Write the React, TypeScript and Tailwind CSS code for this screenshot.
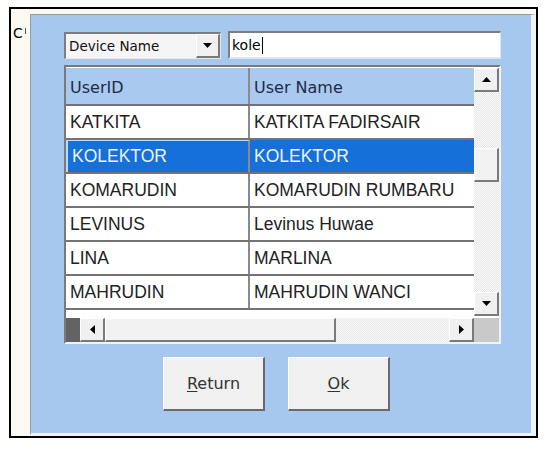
import React from 'react';

const rows = [
  ['KATKITA', 'KATKITA FADIRSAIR'],
  ['KOLEKTOR', 'KOLEKTOR'],
  ['KOMARUDIN', 'KOMARUDIN RUMBARU'],
  ['LEVINUS', 'Levinus Huwae'],
  ['LINA', 'MARLINA'],
  ['MAHRUDIN', 'MAHRUDIN WANCI'],
];

type Dir = 'up' | 'down' | 'left' | 'right';

const Arrow = ({ dir }: { dir: Dir }) => {
  const vertical = dir === 'up' || dir === 'down';
  const points = {
    up: '0,5 4.5,0 9,5',
    down: '0,0 9,0 4.5,5',
    left: '5,0 5,9 0,4.5',
    right: '0,0 0,9 5,4.5',
  }[dir];
  return (
    <svg width={vertical ? 9 : 5} height={vertical ? 5 : 9} viewBox={vertical ? '0 0 9 5' : '0 0 5 9'}>
      <polygon points={points} fill="#000" />
    </svg>
  );
};

const ScrollButton = ({ dir, className }: { dir: Dir; className: string }) => (
  <div
    className={`flex items-center justify-center bg-[#f0f0f0] border-t border-l border-t-white border-l-white border-b-2 border-r-2 border-b-[#7a7a7a] border-r-[#7a7a7a] ${className}`}
  >
    <Arrow dir={dir} />
  </div>
);

const checker =
  'bg-[repeating-conic-gradient(#e6e6e6_0%_25%,#fbfbfb_0%_50%)] bg-[length:2px_2px]';

const App = () => {
  return (
    <div className="w-[546px] h-[450px] bg-white relative overflow-hidden">
      <div className="absolute left-[9px] top-[7px] w-[529px] h-[431px] border-2 border-black flex bg-[#fbfaf2]">
        {/* left strip with clipped caption */}
        <div className="w-[19px] shrink-0 pl-[2px] pt-[17px]">
          <div className="flex items-start gap-[2px] font-['DejaVu_Sans',sans-serif] text-[14px] leading-none text-black">
            <span>C</span>
            <span className="w-[1px] h-[6px] mt-[2px] bg-[#555]" />
          </div>
        </div>

        <div className="flex-1 flex flex-col">
          <div className="h-[5px] shrink-0" />
          <div className="flex-1 bg-[#a6c8ef] border-l border-t border-l-[#9a9a9a] border-t-[#9a9a9a] border-r-[5px] border-r-[#eef3f9] border-b-[3px] border-b-[#eef3f9] pl-[33px] pt-[17px]">
            {/* search row */}
            <div className="flex gap-[7px] items-start">
              <div className="w-[157px] h-[27px] flex items-stretch bg-[#f5f5f5] border-t-2 border-l-2 border-t-[#7d7d7d] border-l-[#7d7d7d] border-b border-r border-b-[#e8e8e8] border-r-[#e8e8e8]">
                <div className="flex-1 flex items-center pl-[3px] font-['DejaVu_Sans',sans-serif] text-[13.5px] text-[#111]">
                  Device Name
                </div>
                <ScrollButton dir="down" className="w-[24px]" />
              </div>
              <div className="w-[273px] h-[28px] -mt-[1px] flex items-center bg-white border-t-2 border-l-2 border-t-[#7d7d7d] border-l-[#7d7d7d] border-b-2 border-r border-b-[#dde6f0] border-r-[#dde6f0] pl-[2px] font-['DejaVu_Sans',sans-serif] text-[14px] text-black">
                kole
                <span className="inline-block w-[1px] h-[17px] bg-black ml-[1px]" />
              </div>
            </div>

            {/* grid */}
            <div className="mt-[6px] w-[437px] h-[279px] border-t-2 border-l-2 border-t-[#7a7a7a] border-l-[#7a7a7a] border-b-2 border-r-2 border-b-[#eef3f9] border-r-[#eef3f9] bg-white flex flex-col">
              <div className="flex h-[249px] pt-[1px]">
                <div className="w-[408px] flex flex-col">
                  <div className="flex h-[38px] bg-[#a9c9ee] border-b-2 border-b-[#6f7278] font-['DejaVu_Sans',sans-serif] text-[16px] text-[#1d2b4b]">
                    <div className="w-[184px] pl-[4px] pt-[8px] border-r-2 border-r-[#8a8a8a]">UserID</div>
                    <div className="flex-1 pl-[4px] pt-[8px]">User Name</div>
                  </div>
                  {rows.map(([id, name], i) => {
                    const sel = i === 1;
                    return (
                      <div
                        key={id}
                        className={`flex h-[34px] border-b-2 border-b-[#747474] font-['Liberation_Sans',Arial,sans-serif] text-[17.5px] ${
                          sel ? 'bg-[#1670d8] text-[#eaf4ff]' : 'bg-white text-[#222]'
                        }`}
                      >
                        <div
                          className={`w-[184px] flex items-center pl-[4px] border-r-2 border-r-[#8a8a8a] ${
                            sel ? 'border-l-2 border-t border-l-[#b9dafc] border-t-[#b9dafc] pl-[2px]' : ''
                          }`}
                        >
                          {id}
                        </div>
                        <div className="flex-1 flex items-center pl-[4px]">{name}</div>
                      </div>
                    );
                  })}
                </div>

                {/* vertical scrollbar */}
                <div className="w-[25px] flex flex-col">
                  <ScrollButton dir="up" className="h-[24px]" />
                  <div className={`flex-1 flex flex-col ${checker}`}>
                    <div className="h-[56px]" />
                    <div className="h-[34px] bg-[#f2f2f2] border-t border-l border-t-white border-l-white border-b-2 border-r-2 border-b-[#7a7a7a] border-r-[#7a7a7a]" />
                  </div>
                  <ScrollButton dir="down" className="h-[24px]" />
                </div>
              </div>

              {/* horizontal scrollbar */}
              <div className="flex h-[24px] mt-auto">
                <div className="w-[14px] bg-[#636363]" />
                <ScrollButton dir="left" className="w-[25px]" />
                <div className={`flex-1 flex ${checker}`}>
                  <div className="w-[231px] bg-[#f2f2f2] border-t border-l border-t-white border-l-white border-b-2 border-r-2 border-b-[#7a7a7a] border-r-[#7a7a7a]" />
                </div>
                <ScrollButton dir="right" className="w-[25px]" />
                <div className="w-[25px] bg-[#c9c9c9]" />
              </div>
            </div>

            {/* buttons */}
            <div className="mt-[13px] ml-[99px] flex gap-[23px]">
              <button className="w-[102px] h-[54px] bg-[#f0f0f0] border-t border-l border-t-white border-l-white border-b-2 border-r-2 border-b-[#6a6a6a] border-r-[#6a6a6a] font-['DejaVu_Sans',sans-serif] text-[16px] text-[#333]">
                <span className="underline underline-offset-2">R</span>eturn
              </button>
              <button className="w-[102px] h-[54px] bg-[#f0f0f0] border-t border-l border-t-white border-l-white border-b-2 border-r-2 border-b-[#6a6a6a] border-r-[#6a6a6a] font-['DejaVu_Sans',sans-serif] text-[16px] text-[#333]">
                <span className="underline underline-offset-2">O</span>k
              </button>
            </div>
          </div>
        </div>
      </div>
    </div>
  );
};

export default App;
